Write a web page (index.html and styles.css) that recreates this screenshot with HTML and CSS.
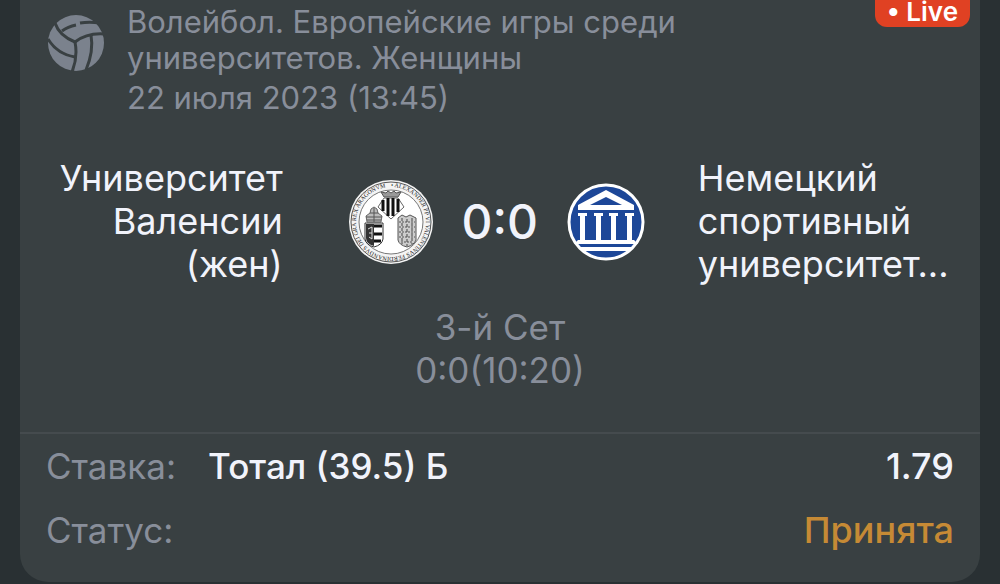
FILE: index.html
```html
<!DOCTYPE html>
<html lang="ru">

<head>
    <meta charset="utf-8">
    <meta name="viewport" content="width=device-width, initial-scale=1.0">
    <title>Ставка</title>
    <link rel="stylesheet" href="styles.css">
</head>

<body>
    <main class="bet-card">
        <span class="live-badge">• Live</span>

        <header class="event">
            <svg class="ball" viewBox="0 0 56 56" aria-hidden="true">
                <circle cx="28" cy="28" r="28" fill="#7b828d" />
                <g fill="none" stroke="#394042" stroke-width="3">
                    <path d="M7 8 C10 17 17 23 27 27 C36 20 45 18 57 19" />
                    <path d="M27 27 C29 37 28 47 24 57" />
                    <path d="M14 16 C18 13 23 11 28 10" />
                    <path d="M32 8 C38 7 45 7 52 8" />
                    <path d="M43 20 C45 31 43 43 38 55" />
                    <path d="M0 24 C6 34 15 40 27 42" />
                </g>
            </svg>
            <div class="event-text">
                <p class="league">Волейбол. Европейские игры среди университетов. Женщины</p>
                <p class="date">22 июля 2023 (13:45)</p>
            </div>
        </header>

        <section class="match">
            <p class="team home">Университет Валенсии (жен)</p>
            <div class="versus">
                <svg class="logo-home" viewBox="0 0 84 84" role="img" aria-label="Университет Валенсии">
                    <defs>
                        <path id="ring" d="M42 7 A35 35 0 1 1 41.9 7" />
                    </defs>
                    <circle cx="42" cy="42" r="42" fill="#f4f4f4" />
                    <circle cx="42" cy="42" r="40" fill="none" stroke="#555" />
                    <circle cx="42" cy="42" r="32" fill="#fff" stroke="#777" />
                    <text class="ring-text"><textPath href="#ring">• ALEXANDER PP VI VALENTINVS FERDINANDVS DEI GRA REX ARAGONVM</textPath></text>
                    <!-- crown and striped diamond -->
                    <path d="M35 17 L32 12 L37 13 L39 11 L42 13 L45 11 L47 13 L52 12 L49 17 Z" fill="#999" stroke="#555" />
                    <path d="M35 18 H49 L55 27 L42 39 L29 27 Z" fill="#fff" stroke="#666" />
                    <path d="M34 20 V31 M39 18 V36 M44 18 V36 M49 19 V32" stroke="#111" stroke-width="3" />
                    <!-- papal shield -->
                    <path d="M18 42 L17 36 L21 33 L22 29 L25 27 L28 29 L29 33 L33 36 L32 42 Z" fill="#bbb" stroke="#666" />
                    <path d="M21 33 H29 M17 37 H33 M18 40 H32 M25 28 V42" stroke="#555" />
                    <path d="M16 43 H34 V59 Q33 65 25 67 Q17 65 16 59 Z" fill="#fff" stroke="#333" />
                    <path d="M17 44 H25 V66 Q17 64 17 58 Z" fill="#333" />
                    <path d="M25 46 H33 M25 54 H33 M25 61 H32" stroke="#111" stroke-width="3" />
                    <path d="M19 49 L23 47 V59 L20 57 M20 53 H23" fill="none" stroke="#ddd" />
                    <!-- royal shield -->
                    <path d="M49 38 L53 35 L57 37 L61 35 L67 38 V60 Q65 65 58 67 Q50 65 49 60 Z" fill="#ccc" stroke="#555" />
                    <path d="M53 38 V64 M58 39 V66 M63 38 V64" stroke="#444" stroke-dasharray="3 2" />
                    <path d="M50 42 H66 M50 47 H66 M50 52 H66 M50 57 H66 M52 62 H64" stroke="#555" stroke-dasharray="2 1" />
                </svg>
                <strong class="score">0:0</strong>
                <svg class="logo-away" viewBox="0 0 78 78" role="img" aria-label="Немецкий спортивный университет">
                    <circle cx="39" cy="39" r="37" fill="#1d4798" stroke="#fff" stroke-width="3" />
                    <path fill="#fff" fill-rule="evenodd" d="M39 7 L67 22 V27 H11 V22 Z M39 14 L23 22 H55 Z" />
                    <path fill="#fff" d="M11 30 H20 V33 H18 V57 H13 V33 H11 Z M27 30 H36 V33 H34 V57 H29 V33 H27 Z M42 30 H51 V33 H49 V57 H44 V33 H42 Z M58 30 H67 V33 H65 V57 H60 V33 H58 Z" />
                    <path fill="#fff" d="M11 57 H67 L71 61 H7 Z M12 64 H66 L63 68 H15 Z" />
                </svg>
            </div>
            <p class="team away">Немецкий спортивный университет...</p>
        </section>

        <p class="period">3-й Сет<br>0:0(10:20)</p>

        <dl class="details">
            <div class="row">
                <dt>Ставка:</dt>
                <dd class="pick">Тотал (39.5) Б</dd>
                <dd class="odds">1.79</dd>
            </div>
            <div class="row">
                <dt>Статус:</dt>
                <dd class="status">Принята</dd>
            </div>
        </dl>
    </main>
</body>

</html>
```
FILE: styles.css
```css
* {
    box-sizing: border-box;
}

body {
    margin: 0;
    padding: 0 20px;
    background-color: #293033;
    color: #f1f3fb;
    font-family: Inter, "Liberation Sans", sans-serif;
}

p,
dl,
dd {
    margin: 0;
}

.bet-card {
    position: relative;
    background-color: #394042;
    border-radius: 0 0 28px 28px;
}

.live-badge {
    position: absolute;
    top: 0;
    right: 10px;
    padding: 0 12px 4px;
    border-radius: 0 0 12px 12px;
    background-color: #e04123;
    color: #fff;
    font-size: 26px;
    line-height: 23px;
    font-weight: 600;
}

.event {
    display: flex;
    gap: 23px;
    padding: 4px 28px 0;
    color: #888e9a;
    font-size: 31px;
    line-height: 36px;
}

.ball {
    flex: none;
    width: 56px;
    height: 56px;
    margin-top: 11px;
}

.event-text {
    max-width: 600px;
}

.date {
    margin-top: 4px;
}

.match {
    display: grid;
    grid-template-columns: minmax(0, 12fr) auto minmax(0, 13fr);
    padding: 41px 28px 0;
    font-size: 36px;
    line-height: 43px;
}

.home {
    text-align: right;
}

.versus {
    display: flex;
    align-items: center;
    justify-content: space-between;
    width: 415px;
    padding: 0 53px 0 66px;
}

.logo-home {
    width: 84px;
    height: 84px;
}

.logo-away {
    width: 78px;
    height: 78px;
}

.ring-text {
    fill: #222;
    font-family: "Liberation Serif", serif;
    font-size: 6px;
}

.score {
    font-size: 48px;
    font-weight: 500;
}

.period {
    padding: 20px 0 40px;
    color: #888e9a;
    font-size: 35px;
    line-height: 43px;
    text-align: center;
}

.details {
    padding: 0 26px 20px;
    border-top: 2px solid #454b4e;
    font-size: 35px;
    line-height: 64px;
}

.row {
    display: flex;
}

dt {
    color: #888e9a;
}

.pick {
    margin-left: 32px;
    font-weight: 500;
}

.odds,
.status {
    margin-left: auto;
    font-size: 36px;
    font-weight: 500;
}

.status {
    color: #c68a35;
}
```
